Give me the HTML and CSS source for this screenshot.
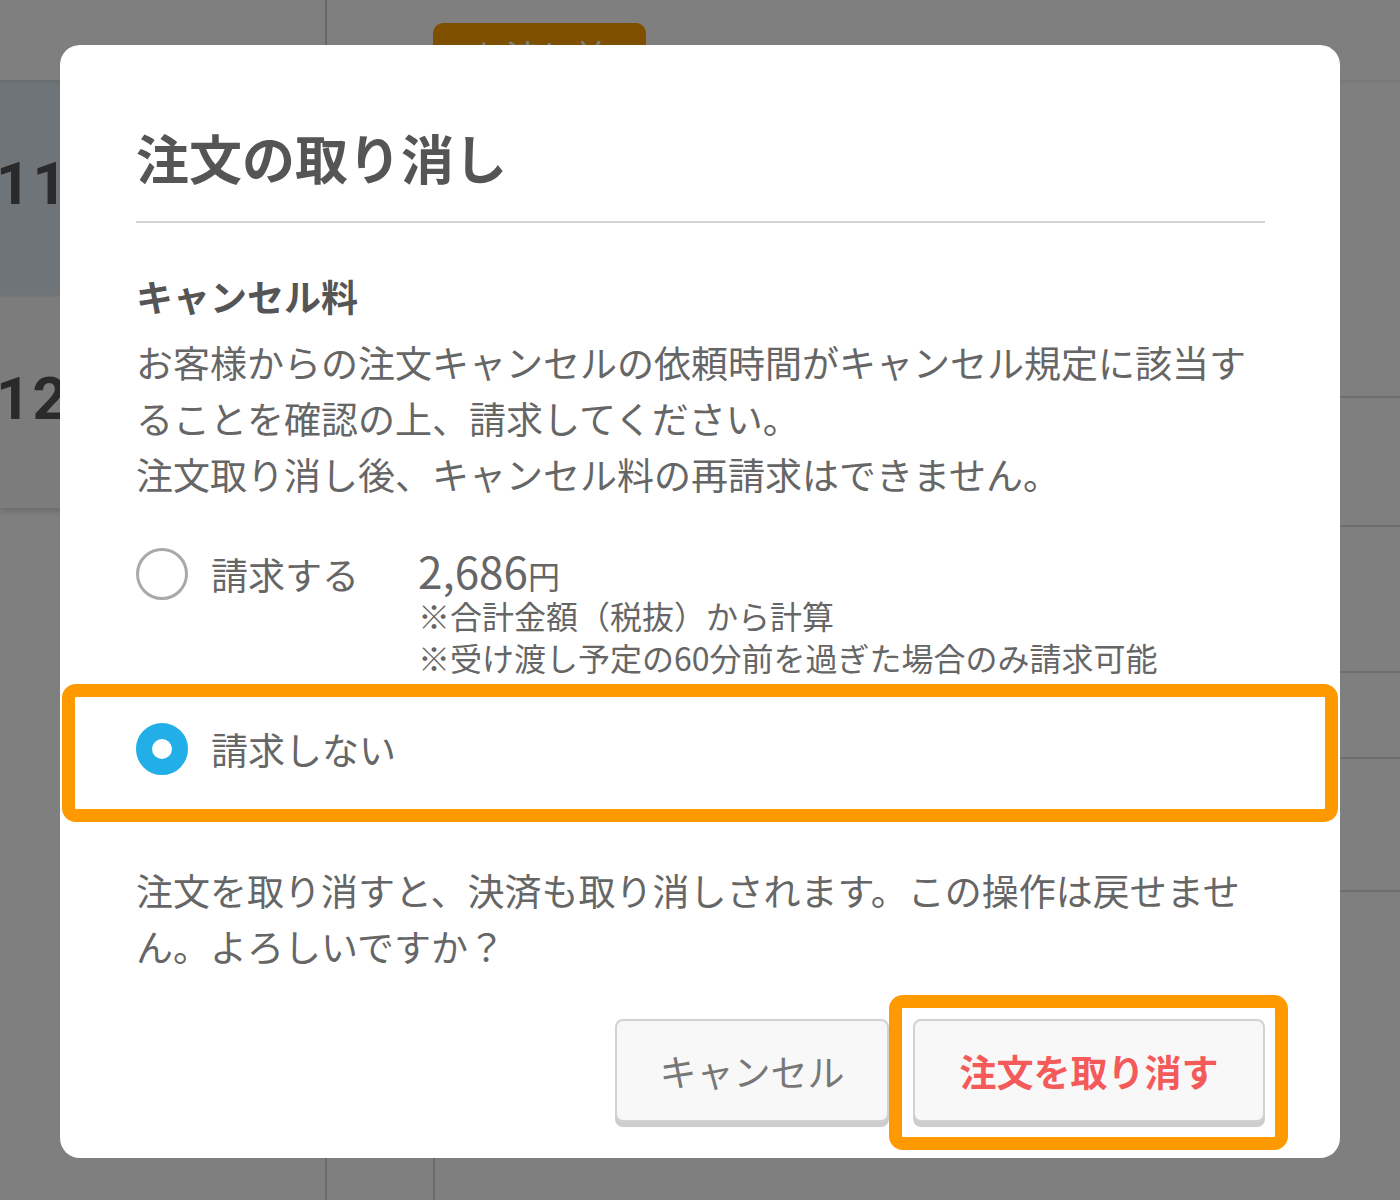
FILE: index.html
```html
<!DOCTYPE html>
<html lang="ja">
<head>
    <meta charset="UTF-8">
    <meta name="viewport" content="width=device-width, initial-scale=1.0">
    <title>注文の取り消し</title>
    <link rel="stylesheet" href="styles.css">
</head>
<body>
    <div class="page">
        <header class="topbar">
            <div class="topbar-side"></div>
            <div class="topbar-main"><span class="badge">お渡し前</span></div>
        </header>
        <div class="board">
            <aside class="days">
                <div class="day-list">
                    <div class="day is-active">11</div>
                    <div class="day">12</div>
                </div>
            </aside>
            <div class="slot-col"></div>
            <div class="timeline">
                <div class="slot"></div>
                <div class="slot"></div>
                <div class="slot"></div>
                <div class="slot"></div>
                <div class="slot"></div>
            </div>
        </div>
    </div>

    <div class="overlay"></div>

    <div class="modal">
        <h1 class="modal-title">注文の取り消し</h1>
        <hr class="divider">

        <h2 class="section-title">キャンセル料</h2>
        <p class="text">お客様からの注文キャンセルの依頼時間がキャンセル規定に該当することを確認の上、請求してください。<br>注文取り消し後、キャンセル料の再請求はできません。</p>

        <div class="option">
            <span class="radio"></span>
            <span class="option-label">請求する</span>
            <div class="fee">
                <div class="price">2,686<span class="yen">円</span></div>
                <div class="note">※合計金額（税抜）から計算</div>
                <div class="note">※受け渡し予定の60分前を過ぎた場合のみ請求可能</div>
            </div>
        </div>

        <div class="option is-highlight">
            <span class="radio is-checked"></span>
            <span class="option-label">請求しない</span>
        </div>

        <p class="text warning">注文を取り消すと、決済も取り消しされます。この操作は戻せません。よろしいですか？</p>

        <div class="actions">
            <button class="btn btn-cancel">キャンセル</button>
            <span class="btn-focus">
                <button class="btn btn-danger">注文を取り消す</button>
            </span>
        </div>
    </div>
</body>
</html>
```

FILE: styles.css
```css
* { box-sizing: border-box; }

body {
    margin: 0;
    width: 1400px;
    height: 1200px;
    overflow: hidden;
    background: #fff;
    font-family: "Noto Sans CJK JP", "Noto Sans", sans-serif;
}

/* page behind the dialog */
.page { height: 1200px; }

.topbar {
    display: flex;
    height: 80px;
    background: #fff;
    box-shadow: 0 2px 4px rgba(0,0,0,0.08);
    position: relative;
}
.topbar-side { width: 327px; border-right: 2px solid #cfcfcf; }
.topbar-main { padding: 23px 0 0 106px; }
.badge {
    display: block;
    width: 213px;
    height: 64px;
    padding-top: 8px;
    border-radius: 10px;
    background: #ff9e00;
    color: #fff;
    font-size: 34px;
    text-align: center;
}

.board { display: flex; height: 1120px; }
.days { width: 327px; border-right: 2px solid #d5d5d5; }
.day-list { box-shadow: 0 4px 6px rgba(0,0,0,0.15); }
.day {
    height: 213px;
    padding-top: 72px;
    border-top: 2px solid #ececec;
    background: #f8f8f8;
    color: #555;
    font-family: Roboto, sans-serif;
    font-weight: 700;
    font-size: 60px;
    line-height: 60px;
    letter-spacing: 2px;
    text-indent: -4px;
}
.day.is-active { height: 215px; border-top: 0; background: #dee8f0; padding-top: 74px; }
.slot-col { width: 108px; border-right: 2px solid #d5d5d5; }
.timeline { flex: 1; }
.slot { border-bottom: 2px solid #dcdcdc; }
.slot:nth-child(1) { height: 318px; }
.slot:nth-child(2) { height: 129px; }
.slot:nth-child(3) { height: 146px; }
.slot:nth-child(4) { height: 86px; }
.slot:nth-child(5) { height: 133px; }

.overlay {
    position: fixed;
    inset: 0;
    background: rgba(0,0,0,0.5);
}

/* dialog */
.modal {
    position: absolute;
    top: 45px;
    left: 60px;
    width: 1280px;
    padding: 86px 75px 36px 76px;
    background: #fff;
    border-radius: 20px;
    color: #666;
}
.modal-title {
    margin: 0;
    font-size: 53px;
    line-height: 52px;
    font-weight: 700;
    color: #555;
}
.divider {
    margin: 38px 0 45px;
    border: 0;
    height: 2px;
    background: #d4d4d4;
}
.section-title {
    margin: 0;
    font-size: 37px;
    line-height: 56px;
    font-weight: 700;
    color: #555;
}
.text {
    margin: 10px 0 0;
    font-size: 37px;
    line-height: 56px;
}
.text.warning { margin-top: 40px; }

.option {
    display: flex;
    align-items: flex-start;
    margin-top: 46px;
}
.option.is-highlight {
    margin: 6px -73px 0 -74px;
    padding: 26px 60px 34px 61px;
    border: 13px solid #ff9900;
    border-radius: 14px;
}
.radio {
    flex: none;
    width: 52px;
    height: 52px;
    border-radius: 50%;
    border: 3px solid #a9a9a9;
}
.radio.is-checked { border: 16px solid #22aee6; }
.option-label {
    width: 207px;
    margin-left: 23px;
    font-size: 37px;
    line-height: 52px;
}
.price {
    height: 46px;
    font-size: 44px;
    line-height: 44px;
}
.yen { font-size: 32px; line-height: 0; }
.note {
    font-size: 32px;
    line-height: 42px;
}

.actions {
    display: flex;
    justify-content: flex-end;
    margin-top: 45px;
}
.btn {
    height: 103px;
    border: 2px solid #d2d2d2;
    border-radius: 8px;
    background: #f8f8f8;
    box-shadow: 0 5px 0 #cdcdcd;
    font-family: "Noto Sans CJK JP", sans-serif;
    font-size: 37px;
    color: #777;
    cursor: pointer;
}
.btn-cancel { width: 274px; }
.btn-danger { width: 352px; color: #f45a5a; font-weight: 700; }
.btn-focus {
    display: block;
    margin: -24px -23px -28px 0;
    padding: 11px 10px 15px 11px;
    border: 13px solid #ff9900;
    border-radius: 14px;
}
```
